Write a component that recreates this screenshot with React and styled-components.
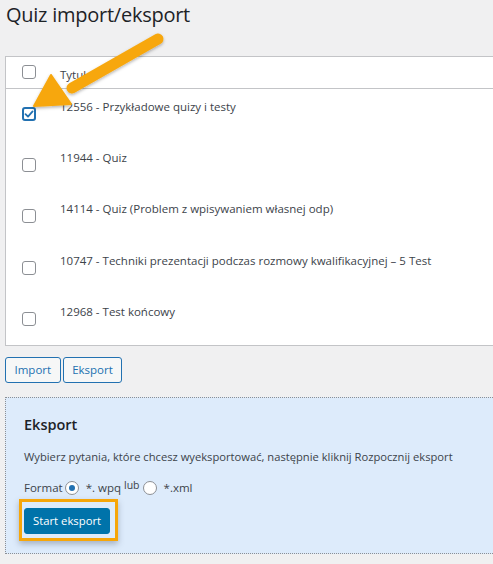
import React from "react";
import styled, { createGlobalStyle } from "styled-components";

const Global = createGlobalStyle`
  html, body { margin: 0; padding: 0; background: #f0f0f1; overflow: hidden; }
  body { font-family: "Open Sans", "Noto Sans", sans-serif; color: #3c434a; }
`;

const Page = styled.div`
  position: relative;
  width: 493px;
  height: 564px;
  padding-left: 5px;
  box-sizing: border-box;
  overflow: hidden;
`;

const Title = styled.h1`
  margin: 0;
  padding: 1px 0 0 1px;
  height: 56px;
  box-sizing: border-box;
  font-size: 20px;
  letter-spacing: -0.25px;
  font-weight: 400;
  line-height: 28px;
  color: #1d2327;
`;

const Table = styled.div`
  width: 520px;
  background: #fff;
  border: 1px solid #c3c4c7;
  box-sizing: border-box;
`;

const Row = styled.div`
  display: flex;
  align-items: flex-start;
  height: ${(p) => (p.$head ? "32px" : "51.2px")};
  box-sizing: border-box;
  border-bottom: ${(p) => (p.$head ? "1px solid #c3c4c7" : "none")};
`;

const CheckCell = styled.div`
  width: 54px;
  padding: ${(p) => (p.$head ? "8px" : "18px")} 0 0 16px;
  box-sizing: border-box;
  flex: none;
`;

const TextCell = styled.div`
  padding-top: 11px;
  font-size: 11.5px;
  line-height: 14px;
  color: #3c434a;
  white-space: nowrap;
`;

const Box = styled.span`
  display: flex;
  align-items: center;
  justify-content: center;
  width: 14px;
  height: 14px;
  box-sizing: border-box;
  border-radius: 3px;
  background: #fff;
  border: ${(p) => (p.$checked ? "2px solid #2271b1" : "1px solid #8c8f94")};
`;

const Buttons = styled.div`
  display: flex;
  gap: 2px;
  margin-top: 11px;
`;

const SecondaryButton = styled.button`
  height: 26px;
  padding: 0 8.5px;
  border: 1px solid #2271b1;
  border-radius: 3px;
  background: #f6f7f7;
  color: #2271b1;
  font-family: "Open Sans", "Noto Sans", sans-serif;
  font-size: 11.5px;
  line-height: 24px;
`;

const Panel = styled.div`
  margin-top: 14px;
  width: 520px;
  height: 157px;
  box-sizing: border-box;
  background: #ddebfb;
  border: 1px dotted #8c8f94;
  padding: 17px 0 0 18px;
`;

const PanelTitle = styled.h2`
  margin: 0;
  font-size: 14.5px;
  font-weight: 600;
  line-height: 20px;
  color: #1d2327;
`;

const Description = styled.p`
  margin: 14px 0 0;
  font-size: 11.2px;
  line-height: 16px;
  color: #3c434a;
`;

const FormatRow = styled.div`
  display: flex;
  align-items: center;
  margin-top: 15px;
  font-size: 11.5px;
  line-height: 16px;
  color: #3c434a;
  white-space: nowrap;
`;

const Radio = styled.span`
  display: inline-flex;
  align-items: center;
  justify-content: center;
  width: 14px;
  height: 14px;
  box-sizing: border-box;
  border-radius: 50%;
  border: 1px solid #8c8f94;
  background: #fff;
  margin: 0 ${(p) => p.$mr}px 0 ${(p) => p.$ml}px;
  &::after {
    content: "";
    display: ${(p) => (p.$checked ? "block" : "none")};
    width: 6px;
    height: 6px;
    border-radius: 50%;
    background: #2271b1;
  }
`;

const Sup = styled.sup`
  font-size: 10.5px;
  position: relative;
  top: -3px;
  vertical-align: baseline;
  margin: 0 0 0 3px;
`;

const Highlight = styled.div`
  display: inline-flex;
  margin: 3px 0 0 -5px;
  padding: 6px 5px 4px 2px;
  border: 3px solid #f6a609;
  box-shadow: 0 3px 6px rgba(60, 70, 90, 0.35);
`;

const PrimaryButton = styled.button`
  height: 26px;
  padding: 0 8px;
  border: 1px solid #0073aa;
  border-radius: 3px;
  background: #0073aa;
  color: #fff;
  font-family: "Open Sans", "Noto Sans", sans-serif;
  font-size: 11.3px;
  line-height: 24px;
`;

const ArrowOverlay = styled.svg`
  position: absolute;
  left: 0;
  top: 0;
  pointer-events: none;
`;

const Check = () => (
  <svg width="10" height="10" viewBox="0 0 10 10">
    <path d="M1.5 5.2 L4 7.6 L8.6 2.4" fill="none" stroke="#2271b1" strokeWidth="1.8" strokeLinecap="round" strokeLinejoin="round" />
  </svg>
);

const rows = [
  { label: "12556 - Przykładowe quizy i testy", checked: true },
  { label: "11944 - Quiz" },
  { label: "14114 - Quiz (Problem z wpisywaniem własnej odp)" },
  { label: "10747 - Techniki prezentacji podczas rozmowy kwalifikacyjnej – 5 Test" },
  { label: "12968 - Test końcowy" },
];

export default function App() {
  return (
    <Page>
      <Global />
      <Title>Quiz import/eksport</Title>
      <Table>
        <Row $head>
          <CheckCell $head><Box /></CheckCell>
          <TextCell>Tytuł</TextCell>
        </Row>
        {rows.map((r) => (
          <Row key={r.label}>
            <CheckCell>
              <Box $checked={r.checked}>{r.checked && <Check />}</Box>
            </CheckCell>
            <TextCell>{r.label}</TextCell>
          </Row>
        ))}
      </Table>
      <Buttons>
        <SecondaryButton>Import</SecondaryButton>
        <SecondaryButton>Eksport</SecondaryButton>
      </Buttons>
      <Panel>
        <PanelTitle>Eksport</PanelTitle>
        <Description>Wybierz pytania, które chcesz wyeksportować, następnie kliknij Rozpocznij eksport</Description>
        <FormatRow>
          Format<Radio $checked $ml={2} $mr={7} />*. wpq<Sup>lub</Sup><Radio $ml={3} $mr={7} />*.xml
        </FormatRow>
        <Highlight>
          <PrimaryButton>Start eksport</PrimaryButton>
        </Highlight>
      </Panel>
      <ArrowOverlay width="493" height="564" viewBox="0 0 493 564">
        <defs>
          <filter id="sh" x="-20%" y="-20%" width="140%" height="140%">
            <feDropShadow dx="0" dy="1.5" stdDeviation="1.5" floodColor="#000" floodOpacity="0.3" />
          </filter>
        </defs>
        <g filter="url(#sh)" fill="#f7a70d" stroke="#f7a70d">
          <line x1="158" y1="39" x2="72" y2="88" strokeWidth="11" strokeLinecap="round" />
          <path d="M34 106 L51 75 L71 104 Z" strokeWidth="2" strokeLinejoin="round" />
        </g>
      </ArrowOverlay>
    </Page>
  );
}
